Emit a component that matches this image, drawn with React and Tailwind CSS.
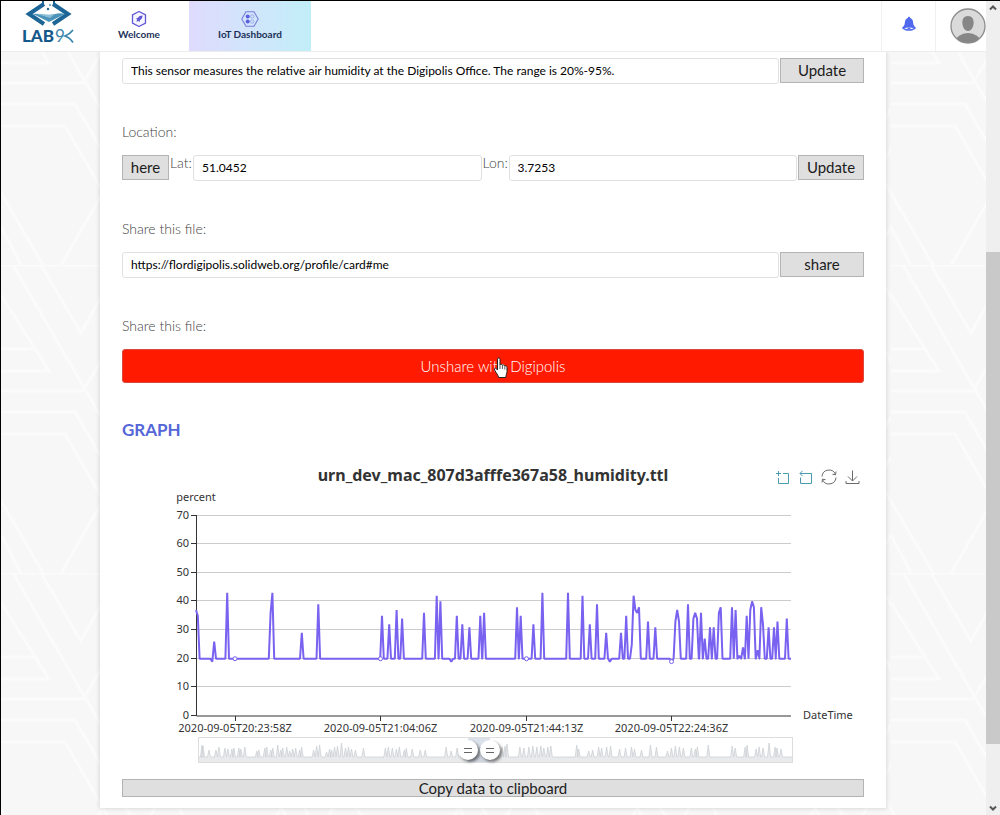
import React from "react";

const BASE = 20;
const STEP = 1.8;
const yOf = (v) => 716 - v * 2.864;

// A run of samples: [x, value, value, ...] spaced one step apart, resting on the base line at both ends.
const RUNS = [
  [227.2, 43], [270.6, 36, 43], [301.8, 29], [318.3, 39],
  [382, 35], [389.2, 32], [396.6, 37], [402.1, 34], [424, 36], [436.7, 42], [440.4, 40],
  [451.3, 19], [456.8, 35], [462.3, 32], [469.4, 31], [480.3, 35], [484.1, 36],
  [517, 38], [520.7, 35], [533.4, 32], [542.4, 43], [568, 43], [582.5, 42], [589.8, 32],
  [597, 39], [606.2, 29], [609.9, 19], [621, 29], [626.2, 35], [631.8, 25, 42, 37, 36, 38],
  [648, 33], [655.3, 31], [671.7, 19], [675.4, 33, 37, 33], [688, 39], [693.4, 34, 36, 34],
  [701, 36], [704.7, 27], [710, 31], [713.7, 31], [718.9, 36, 38], [732, 38], [735.6, 37],
  [739.3, 21], [743, 24], [746.7, 35], [750.3, 37, 40, 38], [757.7, 23], [761.2, 38, 32],
  [768.6, 31], [774, 31], [777.5, 33], [786.8, 34],
];

function seriesPath() {
  const pts = [[196, 37], [197.8, 35], [199.6, BASE], [210.5, BASE], [212.3, 19], [214.2, 26], [216, BASE]];
  RUNS.forEach(([x, ...values]) => {
    pts.push([x - STEP, BASE]);
    values.forEach((v, i) => pts.push([x + i * STEP, v]));
    pts.push([x + values.length * STEP, BASE]);
  });
  pts.push([791, BASE]);
  return "M" + pts.map(([x, v]) => `${x.toFixed(1)} ${yOf(v).toFixed(1)}`).join("L");
}

const OVERVIEW = [
  3, 12, 4, 11, 10, 7, 17, 7, 20, 10, 26, 9, 29, 8, 33, 8, 35, 9, 40, 9, 42, 8, 46, 10, 58, 6, 60, 7, 66, 9, 68, 10,
  72, 7, 74, 9, 79, 12, 82, 7, 84, 9, 88, 10, 91, 6, 94, 8, 97, 9, 101, 7, 103, 10, 115, 7, 118, 11, 121, 12, 128, 5,
  131, 8, 133, 7, 136, 10, 139, 11, 143, 14, 147, 9, 150, 10, 153, 8, 157, 7, 165, 9, 187, 9, 190, 10, 194, 9, 198, 8,
  201, 10, 206, 7, 208, 9, 214, 8, 222, 7, 227, 7, 248, 10, 253, 6, 259, 9, 264, 12, 275, 9, 282, 10, 299, 9, 304, 10,
  307, 11, 309, 13, 322, 10, 326, 9, 331, 10, 335, 11, 339, 10, 343, 11, 346, 9, 350, 10, 353, 11, 379, 12, 381, 8,
  391, 6, 395, 7, 401, 10, 404, 9, 409, 10, 413, 11, 422, 8, 428, 9, 434, 10, 437, 8, 444, 7, 453, 12, 459, 10, 470, 6,
  474, 9, 478, 11, 482, 10, 486, 9, 494, 9, 498, 8, 500, 10, 511, 12, 535, 11, 538, 9, 548, 10, 550, 12, 559, 8, 562, 10,
  566, 9, 572, 14, 578, 10, 580, 9, 584, 8,
];

function overviewPath() {
  let d = "M0 19";
  for (let i = 0; i < OVERVIEW.length; i += 2) {
    const x = OVERVIEW[i];
    d += `L${x - 1.5} 19L${x} ${19 - OVERVIEW[i + 1]}L${x + 1.5} 19`;
  }
  return d + "L595 19";
}

function Backdrop() {
  return (
    <svg className="absolute inset-0 h-full w-full" aria-hidden="true">
      <defs>
        <pattern id="lines" width="178" height="308" patternUnits="userSpaceOnUse" patternTransform="translate(0 -44)">
          <g fill="none" stroke="#fbfbfb" strokeWidth="3">
            <path d="M0 0H100M12 0L100 152M40 0L80 68L100 32M0 30L48 106H0M0 84H36M0 126H82L100 96M0 147H74L100 192M0 169H64L178 366" />
            <path d="M100 152L140 220L178 152M100 192L140 260L178 192M60 308L140 170L178 236M100 96L140 30L178 96M100 32L120 0M160 0L178 32" />
            <path d="M0 236L42 308M0 270L20 308M178 270L156 308" />
          </g>
        </pattern>
      </defs>
      <rect width="100%" height="100%" fill="url(#lines)" />
    </svg>
  );
}

function Logo() {
  return (
    <svg viewBox="0 0 56 44" className="h-11 w-14" role="img" aria-label="LAB9K">
      <g fill="none" stroke="#1c6596" strokeWidth="4">
        <path d="M23 3L8 13L23 23" />
        <path d="M32 3L47 13L32 23" />
      </g>
      <path d="M22 0V4M33 0V4" stroke="#1c6596" strokeWidth="2" />
      <path d="M12 13C18 12 21 15 28 14C35 13 38 11 44 13L28 21Z" fill="#4b93b8" />
      <path d="M16 13C23 12 27 15 34 13L29 17Z" fill="#8cc0d6" />
      <circle cx="27" cy="8" r="1.2" fill="#1c6596" />
      <circle cx="29" cy="4" r="1" fill="#4b93b8" />
      <text x="1" y="41" fontFamily="Lato, sans-serif" fontWeight="900" fontSize="17" fill="#15598b">LAB</text>
      <text x="34" y="41" fontFamily="Lato, sans-serif" fontSize="17" fill="#3c86ad">9</text>
      <path d="M52 29C49 33 47 34 44 35C47 36 49 37 52 41.500" fill="none" stroke="#3c86ad" strokeWidth="1.8" />
    </svg>
  );
}

function WelcomeIcon() {
  return (
    <svg viewBox="0 0 18 18" className="h-[18px] w-[18px]" aria-hidden="true">
      <path d="M9 1.5L15.5 4.8V13.2L9 16.5L2.5 13.2V4.8Z" fill="#f7f6ff" stroke="#6259d6" strokeWidth="1.3" strokeLinejoin="round" />
      <path d="M12.500 5.500C10.500 5.500 8.800 6.300 7.700 8L5.800 8.700L7.200 9.500L6.400 11.700L8.500 10.900L9.300 12.300L10 10.200C11.700 9.200 12.500 7.500 12.500 5.500Z" fill="#5f57d8" />
    </svg>
  );
}

function DashboardIcon() {
  return (
    <svg viewBox="0 0 18 18" className="h-[18px] w-[18px]" aria-hidden="true">
      <path d="M5 1.7H13L17.2 9L13 16.3H5L0.8 9Z" fill="none" stroke="#7a7ddb" strokeWidth="1.1" strokeLinejoin="round" />
      <circle cx="6.7" cy="6.4" r="2" fill="#5b5fe0" />
      <circle cx="6.7" cy="11.6" r="2" fill="#5b5fe0" />
      <circle cx="11.2" cy="6.4" r="1.7" fill="none" stroke="#8f97e2" strokeWidth="0.7" />
      <circle cx="11.2" cy="11.6" r="1.7" fill="none" stroke="#8f97e2" strokeWidth="0.7" />
    </svg>
  );
}

function Header() {
  const tab = "flex flex-col items-center pt-[9px] text-[10px] leading-3 font-bold text-[#1b3158]";
  return (
    <header className="relative flex h-[51px] border-b border-[#ececec] bg-white">
      <a href="#home" className="ml-5 w-[68px]"><Logo /></a>
      <nav className="flex flex-1">
        <a href="#welcome" className={`${tab} w-[100px]`}><WelcomeIcon />Welcome</a>
        <a href="#dashboard" className={`${tab} w-[122px] bg-linear-to-r from-[#dfdbfe] to-[#c1eef8]`}><DashboardIcon />IoT Dashboard</a>
      </nav>
      <button aria-label="Notifications" className="flex w-[55px] items-center justify-center border-x border-[#f0f0f0] pb-1">
        <svg viewBox="0 0 16 16" className="h-4 w-4" aria-hidden="true">
          <path d="M8 .8C8.800 .8 9.200 1.400 9.200 2C11.300 2.600 12 4.400 12.200 7C12.400 9.600 13.400 10.400 15.200 12C13 14 11 14.800 8 14.800S3 14 .8 12C2.600 10.400 3.600 9.600 3.800 7C4 4.400 4.700 2.600 6.800 2C6.800 1.400 7.200 .8 8 .8Z" fill="#5068ee" />
          <path d="M3 12.200C6 11.200 10 11.200 13 12.200C10 13.600 6 13.600 3 12.200Z" fill="#fff" />
          <path d="M6.600 12C7.200 11.500 8.800 11.500 9.400 12V13.200H6.600Z" fill="#5068ee" />
        </svg>
      </button>
      <button aria-label="Account" className="flex w-[50px] items-center justify-end">
        <svg viewBox="0 0 36 36" className="h-9 w-9" aria-hidden="true">
          <defs><clipPath id="face"><circle cx="18" cy="18" r="17" /></clipPath></defs>
          <circle cx="18" cy="18" r="17" fill="#dadada" />
          <g clipPath="url(#face)" fill="#868686">
            <path d="M18 8C22 8 24 11 23.600 15.500C23.300 19.500 21 23 18 23S12.700 19.500 12.400 15.500C12 11 14 8 18 8Z" />
            <ellipse cx="18" cy="34" rx="12.500" ry="9" />
          </g>
          <circle cx="18" cy="18" r="17" fill="none" stroke="#8c8c8c" strokeWidth="1.300" />
        </svg>
      </button>
    </header>
  );
}

const LABEL = "mt-[38px] mb-[13px] block text-sm leading-5 font-light text-[#444]";
const INPUT = "h-[26px] min-w-0 flex-1 rounded-[3px] border border-[#e0e0e0] bg-white px-2 pb-[2px] text-xs text-black";
const BUTTON = "h-[25px] border border-[#b4b4b4] bg-[#dfdfdf] pb-[2px] text-[15px] leading-5 text-[#1c1c1c]";

function Toolbox() {
  return (
    <div className="flex items-center justify-end gap-2 pt-1 pr-1">
      <button aria-label="Zoom">
        <svg viewBox="0 0 15 15" className="h-[15px] w-[15px]" fill="none" stroke="#4a9bb0" aria-hidden="true">
          <path d="M1 3.500H6M3.500 1V6M8 3.500H13.500V13.500H3.500V8" />
        </svg>
      </button>
      <button aria-label="Zoom Reset">
        <svg viewBox="0 0 15 15" className="h-[15px] w-[15px]" fill="none" stroke="#4a9bb0" aria-hidden="true">
          <path d="M4.500 .8L2 3.500L4.500 6.200M2 3.500H13.500V13.500H2.500V7.500" />
        </svg>
      </button>
      <button aria-label="Restore">
        <svg viewBox="0 0 16 16" className="h-4 w-4" fill="none" stroke="#6b6b6b" aria-hidden="true">
          <path d="M1 7.500A7 7 0 0 1 14.500 5.500M15 8.500A7 7 0 0 1 1.500 10.500M15 2.500L14.500 5.800L11.500 5.300M1 13.500L1.500 10.200L4.500 10.700" />
        </svg>
      </button>
      <button aria-label="Save as Image">
        <svg viewBox="0 0 15 15" className="h-[15px] w-[15px]" fill="none" stroke="#6b6b6b" aria-hidden="true">
          <path d="M7.500 .5V11M3 6.500L7.500 11L12 6.500M1 11V13.500H14V11" />
        </svg>
      </button>
    </div>
  );
}

function Chart() {
  const ticks = [
    [235, "2020-09-05T20:23:58Z", 20],
    [380.5, "2020-09-05T21:04:06Z", 20],
    [526.5, "2020-09-05T21:44:13Z", 20],
    [671.5, "2020-09-05T22:24:36Z", 19],
  ];
  return (
    <svg viewBox="122 487 742 250" className="block w-full" role="img" aria-label="Humidity in percent over time" fontFamily="'Noto Sans', sans-serif" fontSize="11" fill="#333">
      {[10, 20, 30, 40, 50, 60, 70].map((v) => (
        <path key={v} d={`M196 ${Math.round(yOf(v)) - 0.5}H791`} stroke="#ccc" />
      ))}
      {[0, 10, 20, 30, 40, 50, 60, 70].map((v) => (
        <g key={v}>
          <path d={`M191 ${Math.round(yOf(v)) - 0.5}H196`} stroke="#333" />
          <text x="189" y={Math.round(yOf(v)) + 3} textAnchor="end">{v}</text>
        </g>
      ))}
      <path d="M196.500 515V716H791" fill="none" stroke="#333" />
      <text x="196" y="501" textAnchor="middle">percent</text>
      <text x="803" y="719">DateTime</text>
      <path d={seriesPath()} fill="none" stroke="#7a62f0" strokeWidth="2" strokeLinejoin="bevel" />
      {ticks.map(([x, label, v]) => (
        <g key={label}>
          <path d={`M${Math.floor(x) + 0.5} 716V721`} stroke="#333" />
          <text x={x} y="732" textAnchor="middle">{label}</text>
          <circle cx={x} cy={yOf(v)} r="2" fill="#fff" stroke="#7861ec" />
        </g>
      ))}
    </svg>
  );
}

const RANGE =
  "pointer-events-none absolute inset-0 h-full w-full appearance-none bg-transparent [&::-webkit-slider-thumb]:pointer-events-auto [&::-webkit-slider-thumb]:h-5 [&::-webkit-slider-thumb]:w-5 [&::-webkit-slider-thumb]:appearance-none [&::-webkit-slider-thumb]:rounded-full [&::-webkit-slider-thumb]:bg-white [&::-webkit-slider-thumb]:bg-[linear-gradient(#666,#666),linear-gradient(#666,#666)] [&::-webkit-slider-thumb]:[background-size:8px_1px,8px_1px] [&::-webkit-slider-thumb]:[background-position:50%_8px,50%_12px] [&::-webkit-slider-thumb]:bg-no-repeat [&::-webkit-slider-thumb]:shadow-[2px_2px_3px_0_rgba(0,0,0,0.5)]";

function DataZoom() {
  return (
    <div className="relative mr-[71px] ml-[76px] h-[26px] border border-[#ddd]">
      <svg viewBox="0 0 595 24" preserveAspectRatio="none" className="block h-full w-full" aria-hidden="true">
        <path d={overviewPath() + "V24H0Z"} fill="#e9eaec" stroke="none" />
        <path d={overviewPath()} fill="none" stroke="#cdd0d4" strokeWidth="0.8" />
        <rect x="270" width="22" height="24" fill="#a7b7cc" fillOpacity="0.400" />
      </svg>
      <input type="range" aria-label="Range start" min="0" max="1000" defaultValue="452" className={RANGE} />
      <input type="range" aria-label="Range end" min="0" max="1000" defaultValue="490" className={RANGE} />
    </div>
  );
}

function HandCursor() {
  return (
    <svg viewBox="0 0 16 22" className="pointer-events-none absolute top-[8px] left-1/2 h-[22px] w-4" aria-hidden="true">
      <path d="M4.500 2.200C4.500 .6 7 .6 7 2.200V8C7.300 6.900 9.300 7 9.400 8.400C10 7.500 11.700 7.800 11.800 9.200C12.600 8.500 14 9 14 10.400V14.500C14 16.500 13 17.500 12.800 20.500H5.600C5.200 18 3.300 16.400 1.600 13C.8 11.300 2.600 10.500 3.500 11.800L4.500 13Z" fill="#fff" stroke="#222" strokeWidth="1" />
      <path d="M7 8V12M9.400 8.800V12M11.800 9.600V12.500" stroke="#333" strokeWidth="0.800" />
    </svg>
  );
}

function ScrollBar() {
  return (
    <div className="flex w-[14px] flex-col bg-[#efefef]" aria-hidden="true">
      <svg viewBox="0 0 14 14" className="h-[14px] w-[14px]"><path d="M4 8.500L7 5.500L10 8.500" fill="none" stroke="#555" strokeWidth="2" /></svg>
      <div className="flex-[237]" />
      <div className="flex-[492] bg-[#c9c9c9]" />
      <div className="flex-[57]" />
      <svg viewBox="0 0 14 14" className="h-[14px] w-[14px]"><path d="M4 5.500L7 8.500L10 5.500" fill="none" stroke="#555" strokeWidth="2" /></svg>
    </div>
  );
}

export default function App() {
  return (
    <div className="flex min-h-screen border-t border-l border-black bg-[#f7f7f7] font-['Lato','Open_Sans',sans-serif]">
      <div className="relative flex min-w-0 flex-1 flex-col">
        <Backdrop />
        <Header />
        <main className="relative mr-[100px] ml-[99px] bg-white px-[22px] pt-[6px] pb-[11px] shadow-[0_0_4px_1px_rgba(0,0,0,0.12)] [clip-path:inset(0_-8px_-8px_-8px)]">
          <div className="flex items-start gap-px">
            <input aria-label="Description" className={INPUT} defaultValue="This sensor measures the relative air humidity at the Digipolis Office. The range is 20%-95%." />
            <button className={`${BUTTON} w-[84px]`}>Update</button>
          </div>

          <span className={LABEL}>Location:</span>
          <div className="flex items-start gap-px">
            <button className={`${BUTTON} w-[47px]`}>here</button>
            <label htmlFor="lat" className="w-[22px] text-sm leading-4 font-light text-[#444]">Lat:</label>
            <input id="lat" className={INPUT} defaultValue="51.0452" />
            <label htmlFor="lon" className="w-[25px] text-sm leading-4 font-light text-[#444]">Lon:</label>
            <input id="lon" className={INPUT} defaultValue="3.7253" />
            <button className={`${BUTTON} w-[66px]`}>Update</button>
          </div>

          <label htmlFor="share" className={LABEL}>Share this file:</label>
          <div className="flex items-start gap-px">
            <input id="share" className={INPUT} defaultValue="https://flordigipolis.solidweb.org/profile/card#me" />
            <button className={`${BUTTON} w-[84px]`}>share</button>
          </div>

          <span className={LABEL}>Share this file:</span>
          <div className="relative">
            <button className="block h-[34px] w-full rounded-[3px] border border-[#d8493c] bg-[#ff1a00] text-[15px] font-light text-white">
              Unshare with Digipolis
            </button>
            <HandCursor />
          </div>

          <h2 className="mt-[35px] text-[17px] leading-6 font-bold text-[#5566d8]">GRAPH</h2>
          <div className="mt-[21px] grid grid-cols-[1fr_auto_1fr] items-center">
            <h3 className="col-start-2 font-['Noto_Sans',sans-serif] text-base leading-6 font-bold text-[#333]">urn_dev_mac_807d3afffe367a58_humidity.ttl</h3>
            <Toolbox />
          </div>
          <Chart />
          <DataZoom />
          <button className="mt-4 flex h-[18px] w-full items-center justify-center border border-[#b4b4b4] bg-[#dfdfdf] text-[15px] leading-4 text-[#1c1c1c]">
            Copy data to clipboard
          </button>
        </main>
      </div>
      <ScrollBar />
    </div>
  );
}
